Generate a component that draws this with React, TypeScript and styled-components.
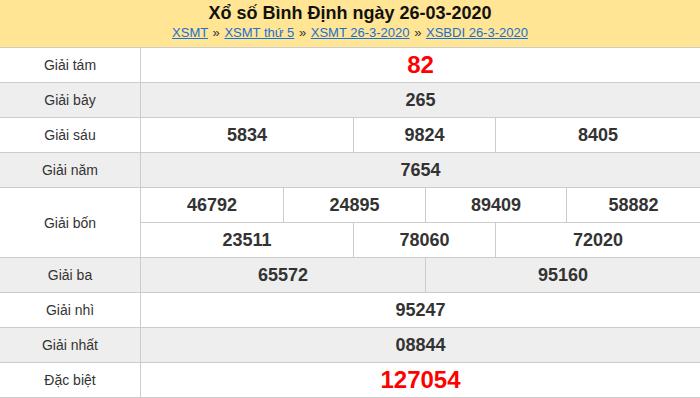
import React from "react";
import styled, { createGlobalStyle } from "styled-components";

const Global = createGlobalStyle`
  html, body { margin: 0; padding: 0; background: #fff; }
  body { font-family: "Liberation Sans", Arial, sans-serif; }
`;

const Page = styled.div`
  width: 700px;
  font-family: "Liberation Sans", Arial, sans-serif;
`;

const Header = styled.header`
  background: #ffe594;
  height: 47px;
  box-sizing: border-box;
  padding-top: 2px;
  text-align: center;
`;

const Title = styled.h2`
  margin: 0;
  font-size: 18px;
  line-height: 22px;
  font-weight: bold;
  color: #111;
`;

const Crumbs = styled.div`
  font-size: 13px;
  line-height: 18px;
  color: #222;
`;

const Crumb = styled.a`
  color: #1a6fd1;
  text-decoration: underline;
`;

const Sep = styled.span`
  padding: 0 1px;
  color: #333;
`;

const Board = styled.div`
  display: grid;
  grid-template-columns: 140px 142px 69px 71px 69px 70px 1fr;
  grid-auto-rows: 34px;
  gap: 1px;
  background: #cccccc;
  padding: 1px 0;
`;

const Cell = styled.div<{ $shade?: boolean }>`
  background: ${(p) => (p.$shade ? "#eeeeee" : "#ffffff")};
  display: flex;
  align-items: center;
  justify-content: center;
`;

const Label = styled(Cell)<{ $rows?: number }>`
  grid-row: span ${(p) => p.$rows ?? 1};
  font-size: 14px;
  color: #333;
`;

const Prize = styled(Cell)<{ $span: number; $special?: boolean }>`
  grid-column: span ${(p) => p.$span};
  font-weight: bold;
  font-size: ${(p) => (p.$special ? "24px" : "18px")};
  color: ${(p) => (p.$special ? "#ff0000" : "#333")};
`;

type Row = {
  label: string;
  lines: { n: string; span: number }[][];
  special?: boolean;
};

const rows: Row[] = [
  { label: "Giải tám", lines: [[{ n: "82", span: 6 }]], special: true },
  { label: "Giải bảy", lines: [[{ n: "265", span: 6 }]] },
  {
    label: "Giải sáu",
    lines: [[{ n: "5834", span: 2 }, { n: "9824", span: 2 }, { n: "8405", span: 2 }]],
  },
  { label: "Giải năm", lines: [[{ n: "7654", span: 6 }]] },
  {
    label: "Giải bốn",
    lines: [
      [
        { n: "46792", span: 1 },
        { n: "24895", span: 2 },
        { n: "89409", span: 2 },
        { n: "58882", span: 1 },
      ],
      [
        { n: "23511", span: 2 },
        { n: "78060", span: 2 },
        { n: "72020", span: 2 },
      ],
    ],
  },
  { label: "Giải ba", lines: [[{ n: "65572", span: 3 }, { n: "95160", span: 3 }]] },
  { label: "Giải nhì", lines: [[{ n: "95247", span: 6 }]] },
  { label: "Giải nhất", lines: [[{ n: "08844", span: 6 }]] },
  { label: "Đặc biệt", lines: [[{ n: "127054", span: 6 }]], special: true },
];

const crumbs = ["XSMT", "XSMT thứ 5", "XSMT 26-3-2020", "XSBDI 26-3-2020"];

export default function App() {
  return (
    <Page>
      <Global />
      <Header>
        <Title>Xổ số Bình Định ngày 26-03-2020</Title>
        <Crumbs>
          {crumbs.map((c, i) => (
            <React.Fragment key={c}>
              {i > 0 && (
                <>
                  {" "}
                  <Sep>»</Sep>{" "}
                </>
              )}
              <Crumb href="#">{c}</Crumb>
            </React.Fragment>
          ))}
        </Crumbs>
      </Header>
      <Board>
        {rows.map((r, i) => {
          const shade = i % 2 === 1;
          return (
            <React.Fragment key={r.label}>
              <Label $shade={shade} $rows={r.lines.length}>
                {r.label}
              </Label>
              {r.lines.map((line) =>
                line.map((c) => (
                  <Prize key={c.n} $shade={shade} $span={c.span} $special={r.special}>
                    {c.n}
                  </Prize>
                ))
              )}
            </React.Fragment>
          );
        })}
      </Board>
    </Page>
  );
}
